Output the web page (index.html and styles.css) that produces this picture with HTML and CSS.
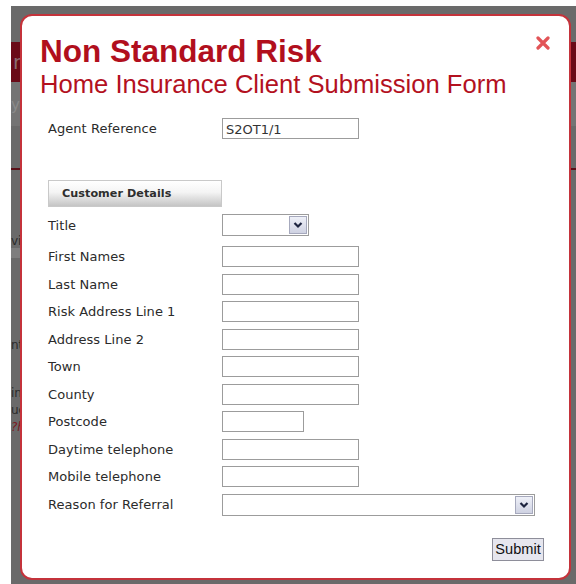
FILE: index.html
```html
<!DOCTYPE html>
<html lang="en">
<head>
<meta charset="utf-8">
<title>Non Standard Risk - Home Insurance Client Submission Form</title>
<link rel="stylesheet" href="styles.css">
</head>
<body>
<div class="page">
  <div class="page-top"></div>
  <div class="page-band"><span class="band-text">n</span></div>
  <div class="page-sub"><span class="sub-text">y</span></div>
  <div class="page-rule"></div>
  <div class="page-tab"><span>vi</span></div>
  <div class="page-text">
    <span>nt</span>
    <span class="gap">in</span>
    <span>uc</span>
    <span class="red">?h</span>
  </div>
</div>

<div class="modal">
  <button class="close" type="button" aria-label="Close">
    <svg width="14" height="14" viewBox="0 0 14 14"><path d="M2 2 L12 12 M12 2 L2 12" stroke="#e25457" stroke-width="3.2" stroke-linecap="round"/></svg>
  </button>
  <h1 class="title">Non Standard Risk</h1>
  <h2 class="subtitle">Home Insurance Client Submission Form</h2>

  <form class="form">
    <div class="row row-agent">
      <label>Agent Reference</label>
      <input class="field" type="text" value="S2OT1/1">
    </div>

    <div class="section">Customer Details</div>

    <div class="row row-title">
      <label>Title</label>
      <div class="select select-short"><span class="arrow"><svg width="10" height="8" viewBox="0 0 10 8"><path d="M1.5 2 L5 5.5 L8.5 2" fill="none" stroke="#1d2440" stroke-width="2.2"/></svg></span></div>
    </div>

    <div class="rows">
      <div class="row"><label>First Names</label><input class="field" type="text"></div>
      <div class="row"><label>Last Name</label><input class="field" type="text"></div>
      <div class="row"><label>Risk Address Line 1</label><input class="field" type="text"></div>
      <div class="row"><label>Address Line 2</label><input class="field" type="text"></div>
      <div class="row"><label>Town</label><input class="field" type="text"></div>
      <div class="row"><label>County</label><input class="field" type="text"></div>
      <div class="row"><label>Postcode</label><input class="field field-short" type="text"></div>
      <div class="row"><label>Daytime telephone</label><input class="field" type="text"></div>
      <div class="row"><label>Mobile telephone</label><input class="field" type="text"></div>
      <div class="row"><label>Reason for Referral</label><div class="select select-wide"><span class="arrow"><svg width="10" height="8" viewBox="0 0 10 8"><path d="M1.5 2 L5 5.5 L8.5 2" fill="none" stroke="#1d2440" stroke-width="2.2"/></svg></span></div></div>
    </div>

    <div class="actions">
      <button class="submit" type="button">Submit</button>
    </div>
  </form>
</div>
</body>
</html>
```

FILE: styles.css
```css
html, body {
  margin: 0;
  padding: 0;
  background: #ffffff;
}

body {
  width: 576px;
  height: 584px;
  overflow: hidden;
  position: relative;
}

/* dimmed page sitting behind the dialog */
.page {
  margin: 6px 0 0 11px;
  height: 578px;
  background: #6a6a6a;
  font-family: "DejaVu Sans", sans-serif;
  font-size: 13px;
  color: #2a2a2a;
}

.page-top {
  height: 36px;
}

.page-band {
  height: 40px;
  background: #6a0a17;
  display: flex;
  align-items: center;
}

.band-text {
  color: #8a6a70;
  font-size: 20px;
  padding-left: 2px;
}

.page-sub {
  height: 86px;
  background: linear-gradient(#747474 0, #747474 44px, #6a6a6a 44px);
}

.sub-text {
  display: block;
  padding: 14px 0 0 0;
  color: #8a8a8a;
  font-size: 15px;
}

.page-rule {
  height: 2px;
  background: #5a1018;
}

.page-tab {
  margin-top: 64px;
  height: 24px;
  width: 40px;
  background: linear-gradient(#6a6a6a 0, #6a6a6a 60%, #7e7e7e 60%);
  color: #2a2a2a;
  font-size: 12px;
}

.page-tab span {
  display: block;
}

.page-text {
  margin-top: 79px;
  display: flex;
  flex-direction: column;
  font-size: 12px;
  line-height: 17px;
}

.page-text .gap {
  margin-top: 31px;
}

.page-text .red {
  color: #7a1a22;
  font-style: italic;
}

/* dialog */
.modal {
  position: absolute;
  left: 20px;
  top: 14px;
  width: 551px;
  height: 566px;
  box-sizing: border-box;
  background: #ffffff;
  border: 2px solid #c4333b;
  border-radius: 12px;
  padding: 17px 0 0 18px;
}

.close {
  position: absolute;
  top: 19px;
  right: 18px;
  width: 16px;
  height: 16px;
  padding: 1px;
  border: 0;
  background: transparent;
  display: flex;
}

.title {
  margin: 0;
  font-family: "Liberation Sans", Arial, sans-serif;
  font-size: 31.5px;
  line-height: 36px;
  font-weight: bold;
  color: #b10f1d;
}

.subtitle {
  margin: 0;
  font-family: "Liberation Sans", Arial, sans-serif;
  font-size: 25.6px;
  line-height: 30px;
  font-weight: normal;
  color: #b3111f;
}

.form {
  margin: 19px 0 0 8px;
  font-family: "DejaVu Sans", sans-serif;
  font-size: 13px;
  color: #2b2b2b;
}

.row {
  display: grid;
  grid-template-columns: 174px auto;
  align-items: center;
  height: 21px;
}

.row label {
  letter-spacing: 0.05px;
}

.field {
  box-sizing: border-box;
  width: 137px;
  height: 21px;
  margin: 0;
  padding: 1px 3px 0;
  border: 1px solid #9c9c9c;
  background: #ffffff;
  font-family: "DejaVu Sans", sans-serif;
  font-size: 13px;
  color: #333333;
}

.field-short {
  width: 82px;
}

.section {
  box-sizing: border-box;
  margin-top: 41px;
  width: 174px;
  height: 27px;
  padding: 6px 0 0 13px;
  border: 1px solid #c9c9c9;
  background: linear-gradient(#ffffff 0%, #f4f4f4 45%, #c4c4c4 100%);
  font-weight: bold;
  font-size: 11.2px;
  color: #2e2e2e;
  letter-spacing: 0.05px;
}

.row-title {
  margin-top: 7px;
  height: 22px;
}

.select {
  box-sizing: border-box;
  height: 22px;
  border: 1px solid #9c9c9c;
  background: #ffffff;
  display: flex;
  justify-content: flex-end;
  align-items: center;
  padding-right: 1px;
}

.select-short {
  width: 87px;
}

.select-wide {
  width: 313px;
}

.arrow {
  box-sizing: border-box;
  width: 18px;
  height: 18px;
  border: 1px solid #a6a9bd;
  background: linear-gradient(#eef0f8, #cfd2e2);
  display: flex;
  align-items: center;
  justify-content: center;
}

.rows {
  margin-top: 10px;
  display: flex;
  flex-direction: column;
  gap: 6.5px;
}

.actions {
  display: flex;
  justify-content: flex-end;
  margin: 23px 25px 0 0;
}

.submit {
  box-sizing: border-box;
  width: 52px;
  height: 23px;
  padding: 0;
  border: 1px solid #8e8e9a;
  background: #e6e6ee;
  font-family: "Liberation Sans", Arial, sans-serif;
  font-size: 14.6px;
  color: #111111;
}
```
